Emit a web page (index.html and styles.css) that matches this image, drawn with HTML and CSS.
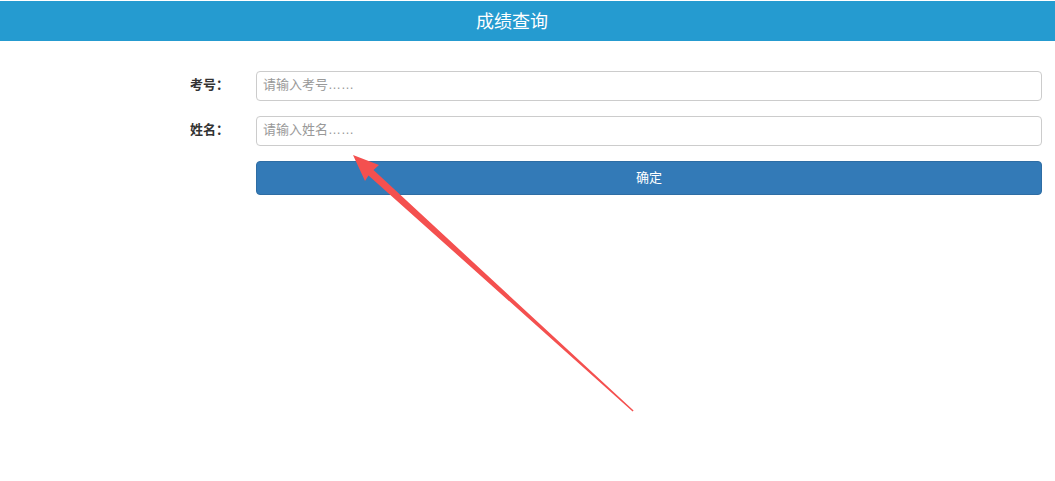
FILE: index.html
```html
<!DOCTYPE html>
<html lang="zh-CN">
<head>
<meta charset="utf-8">
<title>成绩查询</title>
<link rel="stylesheet" href="styles.css">
</head>
<body>
<header class="topbar"><h1 class="title">成绩查询</h1></header>
<form class="query-form">
  <label class="field-label" for="kh">考号：</label>
  <input class="field-input" id="kh" type="text" placeholder="请输入考号……">
  <label class="field-label" for="xm">姓名：</label>
  <input class="field-input" id="xm" type="text" placeholder="请输入姓名……">
  <span class="spacer"></span>
  <button class="submit-btn" type="button">确定</button>
</form>
<svg class="annotation" width="1055" height="481" viewBox="0 0 1055 481" xmlns="http://www.w3.org/2000/svg">
  <polygon points="353,155 379,165 373.5,170 633.6,410.6 632.6,411.4 368.5,175.5 365,181" fill="#f4504f"/>
</svg>
</body>
</html>
```
FILE: styles.css
```css
html, body {
  margin: 0;
  padding: 0;
  background: #fff;
}
body {
  font-family: "Liberation Sans", "Noto Sans CJK SC", sans-serif;
  color: #333;
  position: relative;
  width: 1055px;
  height: 481px;
  overflow: hidden;
}
.topbar {
  margin-top: 1px;
  height: 40px;
  box-sizing: border-box;
  padding-bottom: 2px;
  background: #259bd0;
  display: flex;
  align-items: center;
  justify-content: center;
  padding-right: 31px;
}
.title {
  margin: 0;
  font-family: "Noto Sans CJK SC", sans-serif;
  font-weight: 400;
  font-size: 18px;
  line-height: 1;
  color: #fff;
}
.query-form {
  margin-top: 30px;
  padding-right: 13px;
  display: grid;
  grid-template-columns: 229px 1fr;
  column-gap: 27px;
  row-gap: 15px;
  align-items: center;
}
.field-label {
  text-align: right;
  padding-bottom: 4px;
  font-family: "Noto Sans CJK SC", sans-serif;
  font-weight: 700;
  font-size: 13px;
  line-height: 18px;
  color: #333;
}
.field-input {
  box-sizing: border-box;
  height: 30px;
  width: 100%;
  margin: 0;
  padding: 0 6px 3px;
  border: 1px solid #ccc;
  border-radius: 4px;
  font-family: "Liberation Sans", "Noto Sans CJK SC", sans-serif;
  font-size: 13px;
  color: #555;
  background: #fff;
  outline: none;
}
.field-input::placeholder {
  color: #999;
}
.submit-btn {
  box-sizing: border-box;
  height: 34px;
  width: 100%;
  margin: 0;
  padding: 0 0 3px;
  border: 1px solid #2e6da4;
  border-radius: 4px;
  background: #337ab7;
  color: #fff;
  font-family: "Noto Sans CJK SC", sans-serif;
  font-size: 13px;
}
.annotation {
  position: absolute;
  left: 0;
  top: 0;
  pointer-events: none;
}
```
